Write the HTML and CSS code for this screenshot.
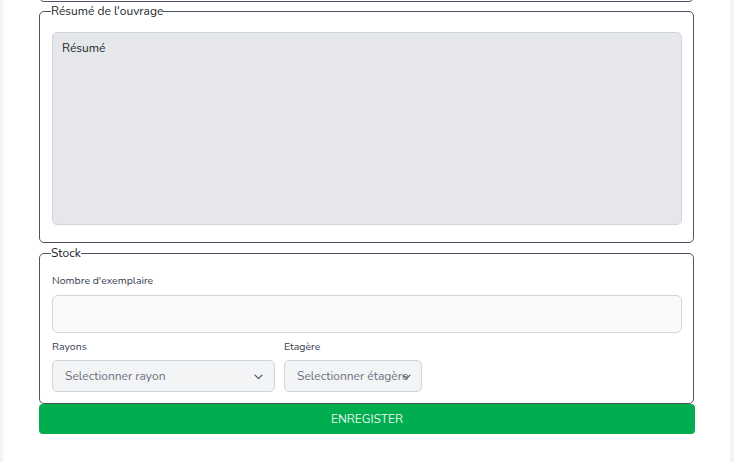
FILE: index.html
```html
<!DOCTYPE html>
<html lang="fr">
<head>
<meta charset="utf-8">
<link rel="stylesheet" href="styles.css">
</head>
<body>
<div class="page">
  <div class="box prev"></div>
  <fieldset class="box resume">
    <legend>Résumé de l'ouvrage</legend>
    <textarea class="area" placeholder="Résumé"></textarea>
  </fieldset>
  <fieldset class="box stock">
    <legend>Stock</legend>
    <label class="lbl">Nombre d'exemplaire</label>
    <input class="inp" type="text">
    <div class="row">
      <div class="col col1">
        <label class="lbl">Rayons</label>
        <div class="sel w1">
          <span>Selectionner rayon</span>
          <svg class="chev" width="9" height="6" viewBox="0 0 9 6"><path d="M1 1.2l3.5 3.5 3.5-3.5" fill="none" stroke="#4b5563" stroke-width="1.2" stroke-linecap="round" stroke-linejoin="round"/></svg>
        </div>
      </div>
      <div class="col">
        <label class="lbl">Etagère</label>
        <div class="sel w2">
          <span class="clip">Selectionner étagère</span>
          <svg class="chev chev2" width="9" height="6" viewBox="0 0 9 6"><path d="M1 1.2l3.5 3.5 3.5-3.5" fill="none" stroke="#4b5563" stroke-width="1.2" stroke-linecap="round" stroke-linejoin="round"/></svg>
        </div>
      </div>
    </div>
  </fieldset>
  <button class="btn">ENREGISTER</button>
</div>
</body>
</html>
```
FILE: styles.css
```css
* { box-sizing: border-box; }
html, body { margin: 0; padding: 0; }
body {
  background: #f3f4f6;
  font-family: "Nunito", Lato, "Open Sans", sans-serif;
  color: #212529;
  overflow: hidden;
}
.page {
  display: flow-root;
  margin: 0 4px 0 3px;
  background: #fff;
  height: 462px;
  padding: 0 36px;
}
.box {
  border: 1px solid #4b5563;
  border-radius: 5px;
  margin: 0;
  padding: 0 11px 0 12px;
}
.box legend {
  padding: 0;
  margin-left: -1px;
  font-size: 12px;
  line-height: 16px;
  color: #212529;
}
.prev {
  height: 40px;
  margin-top: -38px;
  margin-bottom: 1px;
}
.resume {
  padding-top: 13px;
  padding-bottom: 17px;
  margin-bottom: 2px;
}
.area {
  display: block;
  width: 630px;
  height: 193px;
  background: #e5e7eb;
  border: 1px solid #d1d5db;
  border-radius: 5px;
  padding: 8px 9px;
  font-family: inherit;
  font-size: 12px;
  line-height: 14px;
  resize: none;
  margin: 0;
}
.area::placeholder { color: #212529; }
.stock {
  padding-top: 13px;
  padding-bottom: 11px;
  margin-bottom: 0;
}
.lbl {
  display: block;
  font-size: 10.5px;
  line-height: 14px;
  color: #374151;
}
.inp {
  display: block;
  width: 630px;
  height: 38px;
  margin: 7px 0 7px;
  background: #f9fafb;
  border: 1px solid #d1d5db;
  border-radius: 6px;
}
.row { display: flex; gap: 9px; }
.col1 { width: 223px; }
.sel {
  position: relative;
  margin-top: 6px;
  height: 32px;
  background: #f3f4f6;
  border: 1px solid #d1d5db;
  border-radius: 5px;
  display: flex;
  align-items: center;
  padding-left: 12px;
  font-size: 12px;
  color: #6b7280;
}
.w1 { width: 223px; }
.w2 { width: 138px; overflow: hidden; }
.clip { white-space: nowrap; }
.chev { position: absolute; right: 11px; top: 13px; }
.chev2 { right: 10px; }
.btn {
  display: block;
  width: 656px;
  height: 30px;
  margin-top: 0;
  background: #00ad4f;
  border: none;
  border-radius: 4px;
  color: #e6f7e9;
  font-family: inherit;
  font-size: 12px;
}
```
